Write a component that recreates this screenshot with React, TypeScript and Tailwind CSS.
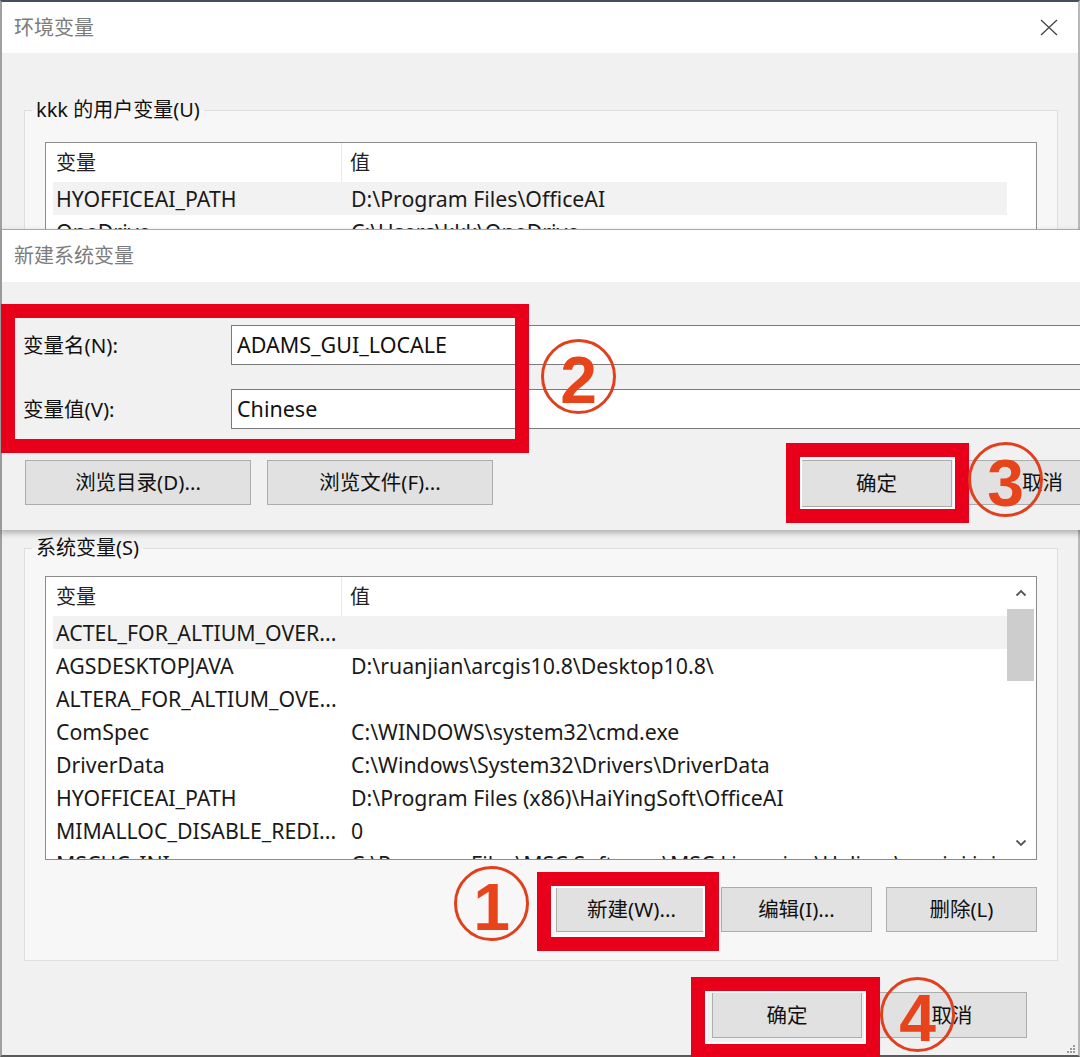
import type { ReactNode } from "react";

const userRows = [
  { name: "HYOFFICEAI_PATH", value: "D:\\Program Files\\OfficeAI" },
  { name: "OneDrive", value: "C:\\Users\\kkk\\OneDrive" },
];

const systemRows = [
  { name: "ACTEL_FOR_ALTIUM_OVER...", value: "" },
  { name: "AGSDESKTOPJAVA", value: "D:\\ruanjian\\arcgis10.8\\Desktop10.8\\" },
  { name: "ALTERA_FOR_ALTIUM_OVE...", value: "" },
  { name: "ComSpec", value: "C:\\WINDOWS\\system32\\cmd.exe" },
  { name: "DriverData", value: "C:\\Windows\\System32\\Drivers\\DriverData" },
  { name: "HYOFFICEAI_PATH", value: "D:\\Program Files (x86)\\HaiYingSoft\\OfficeAI" },
  { name: "MIMALLOC_DISABLE_REDI...", value: "0" },
  { name: "MSCHC_INI", value: "C:\\Program Files\\MSC.Software\\MSC.Licensing\\Helium\\mscini.ini" },
];

function Btn({ children, className = "" }: { children?: ReactNode; className?: string }) {
  return (
    <div
      className={`h-[45px] shrink-0 flex items-center justify-center border border-[#adadad] bg-[#e1e1e1] text-[20.5px] text-[#111] ${className}`}
    >
      {children}
    </div>
  );
}

function ListBox({ rows, scroll }: { rows: { name: string; value: string }[]; scroll?: boolean }) {
  return (
    <div className="h-[284px] flex border border-[#8c8c8c] bg-white overflow-hidden">
      <div className="flex-1 pl-[7px] overflow-hidden">
        {/* header */}
        <div className="h-[39px] flex items-center text-[20px] text-[#222]">
          <div className="w-[289px] h-full flex items-center pl-[3px] border-r border-[#e8e8e8]">变量</div>
          <div className="pl-[8px]">值</div>
        </div>
        {rows.map((r, i) => (
          <div
            key={r.name + i}
            className={`h-[33px] flex items-center text-[21.3px] text-[#1a1a1a] whitespace-nowrap ${
              i === 0 ? "bg-[#f2f2f2]" : ""
            }`}
          >
            <div className="w-[289px] pl-[3px] overflow-hidden">{r.name}</div>
            <div className="pl-[9px]">{r.value}</div>
          </div>
        ))}
      </div>
      <div className="w-[27px] mr-[2px] flex flex-col">
        {scroll && (
          <>
            <div className="h-[32px] flex items-center justify-center">
              <svg width="12" height="8" viewBox="0 0 12 8">
                <path d="M1.5 6.5 L6 2 L10.5 6.5" fill="none" stroke="#555" strokeWidth="1.8" />
              </svg>
            </div>
            <div className="h-[72px] bg-[#cdcdcd]" />
            <div className="flex-1" />
            <div className="h-[32px] flex items-center justify-center">
              <svg width="12" height="8" viewBox="0 0 12 8">
                <path d="M1.5 1.5 L6 6 L10.5 1.5" fill="none" stroke="#555" strokeWidth="1.8" />
              </svg>
            </div>
          </>
        )}
      </div>
    </div>
  );
}

function Circle({ n, className }: { n: string; className: string }) {
  return (
    <div
      className={`absolute w-[75px] h-[75px] rounded-full border-[3px] border-[#e0401e] flex items-center justify-center pt-[6px] font-['Liberation_Sans',Arial,sans-serif] font-bold text-[66px] leading-none text-[#e8441c] ${className}`}
    >
      {n}
    </div>
  );
}

export default function App() {
  return (
    <div className="relative w-[1080px] h-[1057px] overflow-hidden bg-white text-black font-['Noto_Sans','Noto_Sans_CJK_SC',sans-serif]">
      {/* 环境变量 window */}
      <div className="h-full flex flex-col border-t-2 border-t-[#45505e] border-l-2 border-l-[#a0a0a0] border-r-2 border-r-[#b8b8b8] border-b-2 border-b-[#5a5a5a]">
        <div className="h-[51px] shrink-0 bg-white flex items-center justify-between pl-[12px] pr-[20px]">
          <span className="text-[20px] text-[#7c7c7c]">环境变量</span>
          <svg width="18" height="17" viewBox="0 0 18 17">
            <path d="M1 1 L17 16 M17 1 L1 16" stroke="#444" strokeWidth="1.3" fill="none" />
          </svg>
        </div>

        <div className="relative flex-1 bg-[#f1f1f1] pl-[22px] pr-[20px] pt-[45px]">
          <fieldset className="border border-[#dedede] bg-[#f7f7f7] px-[20px] pb-[28px]">
            <legend className="-ml-[13px] px-[4px] text-[20px] leading-[24px] text-[#111]">kkk 的用户变量(U)</legend>
            <div className="mt-[20px]">
              <ListBox rows={userRows} />
            </div>
            <div className="mt-[28px] flex justify-end gap-[14px]">
              <Btn className="w-[151px]" />
              <Btn className="w-[151px]" />
              <Btn className="w-[151px]" />
            </div>
          </fieldset>

          <fieldset className="mt-[8px] border border-[#dedede] bg-[#f7f7f7] px-[20px] pb-[28px]">
            <legend className="-ml-[13px] px-[4px] text-[20px] leading-[24px] text-[#111]">系统变量(S)</legend>
            <div className="mt-[16px]">
              <ListBox rows={systemRows} scroll />
            </div>
            <div className="mt-[27px] flex justify-end gap-[14px]">
              <Btn className="w-[151px]">新建(W)...</Btn>
              <Btn className="w-[151px]">编辑(I)...</Btn>
              <Btn className="w-[151px]">删除(L)</Btn>
            </div>
          </fieldset>

          <div className="mt-[31px] flex justify-end gap-[15px] pr-[31px]">
            <Btn className="w-[150px] h-[46px]">确定</Btn>
            <Btn className="w-[150px] h-[46px]">取消</Btn>
          </div>

          {/* resize grip */}
          <svg className="absolute right-[2px] bottom-[1px]" width="10" height="10" viewBox="0 0 10 10">
            <g fill="#9a9a9a">
              <rect x="7" y="1" width="2" height="2" />
              <rect x="4" y="4" width="2" height="2" />
              <rect x="7" y="4" width="2" height="2" />
              <rect x="1" y="7" width="2" height="2" />
              <rect x="4" y="7" width="2" height="2" />
              <rect x="7" y="7" width="2" height="2" />
            </g>
          </svg>
        </div>
      </div>

      {/* 新建系统变量 window */}
      <div className="absolute left-0 top-[229px] w-[1130px] h-[301px] flex flex-col border-l-2 border-l-[#9a9a9a] border-t border-t-[#a8a8a8] shadow-[0_3px_6px_rgba(0,0,0,0.28)]">
        <div className="h-[52px] shrink-0 bg-white flex items-center pl-[12px]">
          <span className="text-[20px] text-[#7c7c7c]">新建系统变量</span>
        </div>
        <div className="flex-1 bg-[#f1f1f1] pl-[21px] pt-[43px]">
          <div className="flex items-center">
            <span className="w-[208px] text-[20.5px] text-[#111]">变量名(N):</span>
            <div className="flex-1 h-[40px] flex items-center pl-[5px] border border-[#7a7a7a] bg-white text-[21.5px] text-[#111]">
              ADAMS_GUI_LOCALE
            </div>
          </div>
          <div className="mt-[24px] flex items-center">
            <span className="w-[208px] text-[20.5px] text-[#111]">变量值(V):</span>
            <div className="flex-1 h-[40px] flex items-center pl-[5px] border border-[#7a7a7a] bg-white text-[21.5px] text-[#111]">
              Chinese
            </div>
          </div>
          <div className="mt-[31px] flex">
            <Btn className="ml-[2px] w-[226px]">浏览目录(D)...</Btn>
            <Btn className="ml-[16px] w-[226px]">浏览文件(F)...</Btn>
            <Btn className="ml-[308px] w-[151px] h-[47px]">确定</Btn>
            <Btn className="ml-[15px] w-[151px]">取消</Btn>
          </div>
        </div>
      </div>

      {/* annotations */}
      <div className="absolute left-[1px] top-[304px] w-[528px] h-[149px] border-[14px] border-[#e8001b]" />
      <div className="absolute left-[786px] top-[443px] w-[183px] h-[80px] border-[14px] border-[#e8001b] shadow-[inset_0_0_0_2px_#ffffff]" />
      <div className="absolute left-[537px] top-[872px] w-[182px] h-[79px] border-[14px] border-[#e8001b] shadow-[inset_0_0_0_2px_#ffffff]" />
      <div className="absolute left-[691px] top-[977px] w-[189px] h-[81px] border-[14px] border-[#e8001b] shadow-[inset_0_0_0_2px_#ffffff]" />

      <Circle n="1" className="left-[454px] top-[866px]" />
      <Circle n="2" className="left-[541px] top-[339px]" />
      <Circle n="3" className="left-[968px] top-[442px]" />
      <Circle n="4" className="left-[880px] top-[977px]" />
    </div>
  );
}
